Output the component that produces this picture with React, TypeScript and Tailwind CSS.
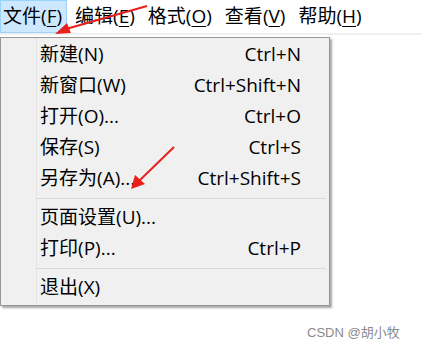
const font = { fontFamily: '"Open Sans", "Noto Sans CJK SC", sans-serif' };

type Item = { label: string; key: string; tail?: string; shortcut?: string } | "sep";

const items: Item[] = [
  { label: "新建", key: "N", shortcut: "Ctrl+N" },
  { label: "新窗口", key: "W", shortcut: "Ctrl+Shift+N" },
  { label: "打开", key: "O", tail: "...", shortcut: "Ctrl+O" },
  { label: "保存", key: "S", shortcut: "Ctrl+S" },
  { label: "另存为", key: "A", tail: "...", shortcut: "Ctrl+Shift+S" },
  "sep",
  { label: "页面设置", key: "U", tail: "..." },
  { label: "打印", key: "P", tail: "...", shortcut: "Ctrl+P" },
  "sep",
  { label: "退出", key: "X" },
];

const menus = [
  ["文件", "F"],
  ["编辑", "E"],
  ["格式", "O"],
  ["查看", "V"],
  ["帮助", "H"],
];

export default function App() {
  return (
    <div
      className="relative w-[422px] h-[352px] bg-white text-black overflow-hidden"
      style={font}
    >
      {/* menu bar */}
      <div className="flex h-[35px] items-stretch gap-[5px] border-b-2 border-[#f0f0f0]">
        {menus.map(([name, k], i) => (
          <div
            key={name}
            className={`flex items-center pl-[2px] pr-[4px] text-[19px] leading-none ${
              i === 0 ? "bg-[#cce8ff] border border-[#99d1ff]" : "border border-transparent"
            }`}
          >
            {name}(<span className="underline underline-offset-[3px]">{k}</span>)
          </div>
        ))}
      </div>

      {/* dropdown */}
      <div className="absolute left-0 top-[37px] w-[330px] bg-[#f0f0f0] border border-[#979797] shadow-[2px_2px_2px_rgba(0,0,0,0.35)] pt-[1px] pb-[2px]">
        <div className="absolute left-[35px] top-0 bottom-0 w-px bg-[#e3e3e3]" />
        {items.map((it, i) =>
          it === "sep" ? (
            <div key={i} className="h-[8px] flex items-center pl-[36px] pr-[3px]">
              <div className="h-px w-full bg-[#d7d7d7]" />
            </div>
          ) : (
            <div
              key={i}
              className="h-[31px] flex items-center justify-between pl-[39px] pr-[28px] text-[19px] leading-none"
            >
              <span>
                {it.label}({it.key}){it.tail}
              </span>
              {it.shortcut && <span>{it.shortcut}</span>}
            </div>
          )
        )}
      </div>

      {/* annotation arrows */}
      <svg className="absolute inset-0 pointer-events-none" width="422" height="352">
        <line x1="147" y1="6" x2="66" y2="29" stroke="#e8201c" strokeWidth="2" />
        <polygon points="55,34 67,23 71,33" fill="#e8201c" />
        <line x1="174" y1="147" x2="139" y2="181" stroke="#e8201c" strokeWidth="2" />
        <polygon points="131,189 135,175 145,184" fill="#e8201c" />
      </svg>

      <div
        className="absolute left-[307px] top-[326px] text-[13px] text-[#8a8a8a] leading-none"
        style={{ fontFamily: '"Liberation Sans", "Noto Sans CJK SC", sans-serif' }}
      >
        CSDN @胡小牧
      </div>
    </div>
  );
}
